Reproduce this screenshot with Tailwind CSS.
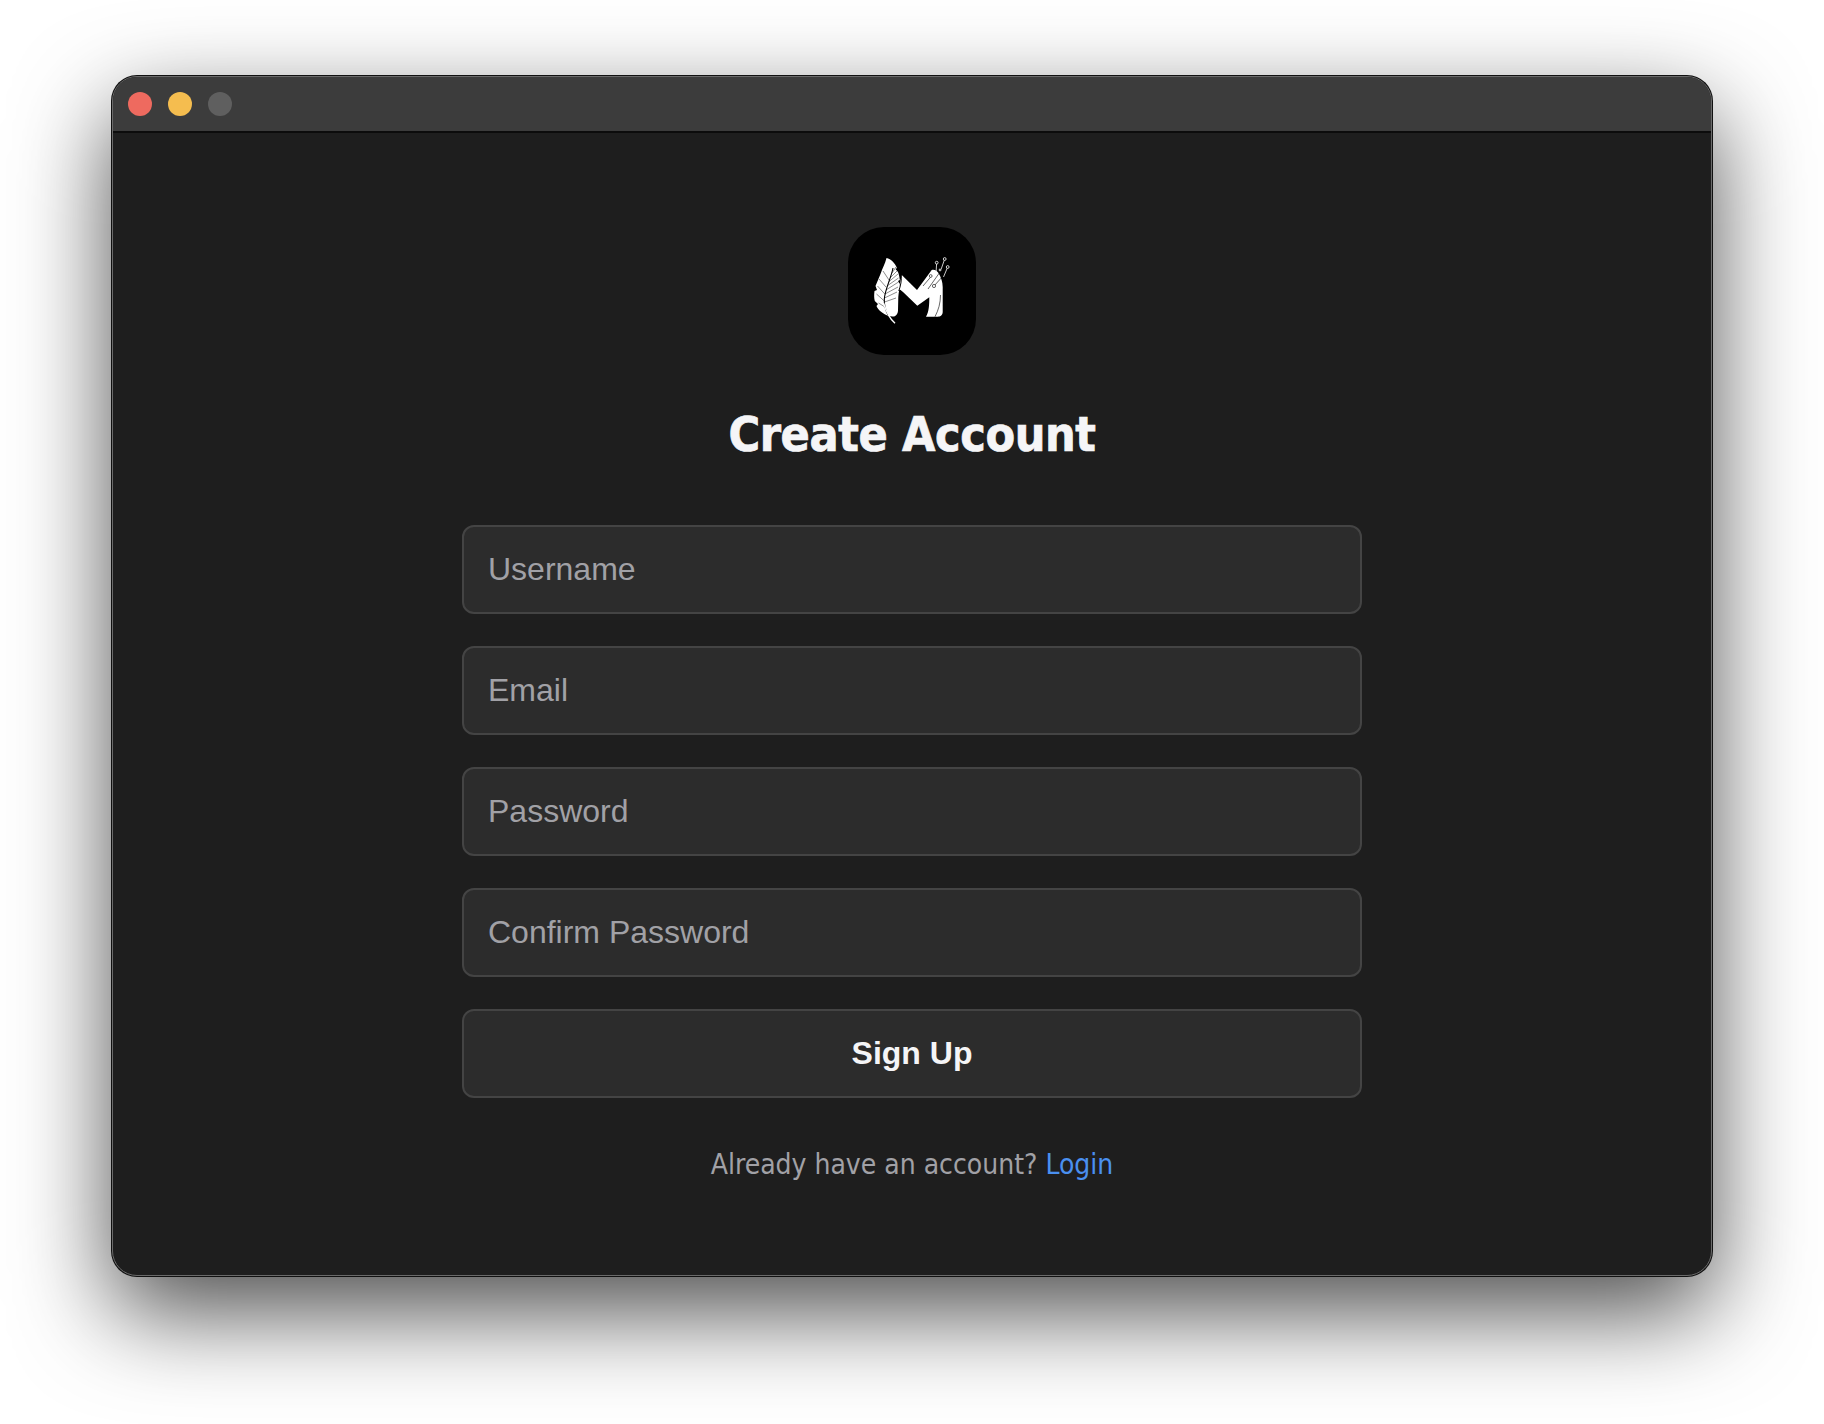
<!DOCTYPE html>
<html lang="en">
<head>
	<meta charset="UTF-8">
	<title>Create Account</title>
	<script src="https://cdn.jsdelivr.net/npm/@tailwindcss/browser@4"></script>
</head>
<body class="bg-white w-[1824px] h-[1424px] pt-[76px] pl-[112px] overflow-hidden font-['Liberation_Sans',sans-serif]">
	<div class="w-[1600px] h-[1200px] rounded-[25px] border border-[#6a6a6a] bg-[#1e1e1e] overflow-hidden shadow-[0_0_0_1px_#111,0_36px_96px_rgba(0,0,0,0.7)] flex flex-col">
		<!-- title bar -->
		<div class="h-14 bg-[#3c3c3c] border-b-2 border-[#0c0c0c] flex items-center gap-4 pl-[15px] shrink-0">
			<span class="w-6 h-6 rounded-full bg-[#ee6a5f]"></span>
			<span class="w-6 h-6 rounded-full bg-[#f5bd4f]"></span>
			<span class="w-6 h-6 rounded-full bg-[#5f5f5f]"></span>
		</div>
		<div class="flex flex-col items-center pt-[94px]">
			<div class="w-32 h-32 rounded-[36px] bg-black">
				<svg width="128" height="128" viewBox="0 0 128 128">
					<!-- feather -->
					<path d="M38.500 31C43 32 47 36 49 41L47.500 42L50 45C51 48 51.500 50 51.800 53L50 54L51.800 57C51.500 62 50.600 66 50.300 70L50 83C50 87 48 89.600 44.500 89.600L41 89C35 87 30 83 28.500 79L30 77L26.800 74C26 71 26 68 26.500 64L29 63L27.500 59C29 55 31 51 32.500 47C34.500 41 37 37 38.500 31Z" fill="#fff"/>
					<!-- rachis and barbs -->
					<g fill="none" stroke="#000">
						<path d="M45 41C43.500 50 37 62 36.300 72C36 78 37.500 83 40 88" stroke-width="1.100"/>
						<path d="M44 46L48 40M42 51L49 44M40.500 55L50 47M39 59L50.500 51M38 63L50.500 55M37 67L50 60M36.500 71L49 65M36.500 75L48 71" stroke-width="0.450"/>
						<path d="M41 53L35 44M38 60L31 52M36.800 67L29.500 59M36.300 74L28.500 67M37 80L30.500 76" stroke-width="0.450"/>
					</g>
					<!-- quill -->
					<path d="M35.500 76C38 84 42 92 47 96.300" fill="none" stroke="#fff" stroke-width="1.400"/>
					<!-- M -->
					<path d="M53.800 48L69 63L83.700 43C86 42 89 43.500 90.500 46C93 50 94.700 55 94.700 60L94.700 85C94.700 88 92.500 89.700 90 89.700L78 89.700C81 85 81.300 78 81.300 70.300L69.300 78.700L55 65C52.500 62.600 50.500 62 50.300 63Z" fill="#fff"/>
					<!-- gap between feather and M -->
					<path d="M53 47.500C54 53 52.500 59 50.800 64" fill="none" stroke="#000" stroke-width="1"/>
					<!-- circuit traces -->
					<g fill="none" stroke="#fff" stroke-width="0.800">
						<path d="M88.700 35.700L88 46"/>
						<path d="M96.700 32L92.500 44"/>
						<path d="M99.700 40L95.500 50"/>
					</g>
					<g fill="none" stroke="#000" stroke-width="0.600">
						<path d="M75 59L82.700 50"/>
						<path d="M80 62L92 45"/>
						<path d="M86 59L95 49"/>
						<path d="M92.500 68C92.500 76 90.500 83 87 89.700"/>
					</g>
					<g fill="#000" stroke="#fff" stroke-width="0.800">
						<circle cx="88.700" cy="35.700" r="1.400"/>
						<circle cx="96.700" cy="32" r="1.400"/>
						<circle cx="99.700" cy="40" r="1.400"/>
					</g>
					<g fill="#fff" stroke="#000" stroke-width="0.600">
						<circle cx="92" cy="43" r="1.400"/>
						<circle cx="86" cy="59" r="1.600"/>
						<circle cx="82.700" cy="49" r="1.400"/>
					</g>
				</svg>
			</div>
			<h1 class="mt-[51px] text-[48px] leading-[56px] font-bold tracking-[-0.4px] font-stretch-condensed text-[#f5f5f7] [-webkit-text-stroke:0.7px_#f5f5f7] font-['DejaVu_Sans',sans-serif]">Create Account</h1>
			<form class="w-[900px] mt-[63px] flex flex-col gap-8">
				<input placeholder="Username" class="h-[89px] px-6 rounded-xl border-2 border-[#444] bg-[#2c2c2c] text-[32px] placeholder:text-[#a1a1a6]">
				<input placeholder="Email" class="h-[89px] px-6 rounded-xl border-2 border-[#444] bg-[#2c2c2c] text-[32px] placeholder:text-[#a1a1a6]">
				<input placeholder="Password" class="h-[89px] px-6 rounded-xl border-2 border-[#444] bg-[#2c2c2c] text-[32px] placeholder:text-[#a1a1a6]">
				<input placeholder="Confirm Password" class="h-[89px] px-6 rounded-xl border-2 border-[#444] bg-[#2c2c2c] text-[32px] placeholder:text-[#a1a1a6]">
				<button type="button" class="h-[89px] pb-0.5 rounded-xl border-2 border-[#444] bg-[#2c2c2c] text-[32px] font-bold text-[#f5f5f7]">Sign Up</button>
			</form>
			<p class="mt-[47px] text-[28px] leading-[40px] font-stretch-condensed text-[#a1a1a6] font-['DejaVu_Sans',sans-serif]">Already have an account? <a href="#" class="text-[#4a90f0]">Login</a></p>
		</div>
	</div>
</body>
</html>
